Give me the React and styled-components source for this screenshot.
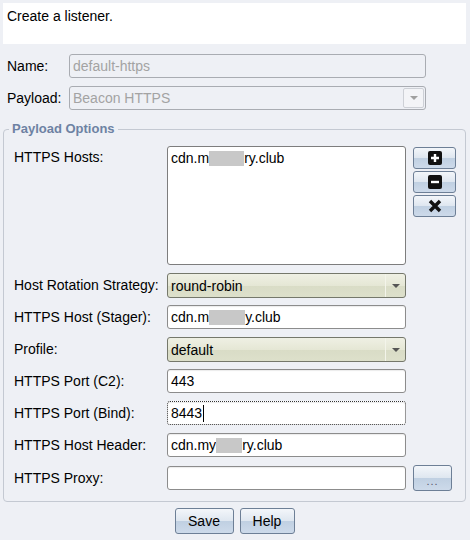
import React from "react";
import styled, { createGlobalStyle } from "styled-components";

const GlobalStyle = createGlobalStyle`
  html, body {
    margin: 0;
    background: #eef0f5;
  }
  body {
    font-family: "Liberation Sans", Arial, sans-serif;
    font-size: 14px;
    color: #000;
  }
`;

const Page = styled.div`
  width: 470px;
  height: 540px;
  box-sizing: border-box;
  padding: 3px 4px 0 3px;
  display: flex;
  flex-direction: column;
`;

const Header = styled.div`
  height: 41px;
  box-sizing: border-box;
  background: #fff;
  padding: 5px 4px;
  line-height: 16px;
`;

const TopForm = styled.div`
  margin-top: 10px;
  padding-left: 4px;
  display: flex;
  flex-direction: column;
  gap: 8px;
`;

const Row = styled.div`
  display: flex;
  align-items: center;
`;

const TopLabel = styled.div`
  width: 62px;
  line-height: 16px;
`;

const TextBox = styled.div`
  width: ${props => props.width || "239px"};
  height: 24px;
  box-sizing: border-box;
  display: flex;
  align-items: center;
  padding: 0 3px;
  border: 1px ${props => (props.focused ? "dotted #333" : "solid #8c8c8c")};
  border-radius: 3px;
  background: ${props => (props.disabled ? "#eef0f5" : "#fff")};
  color: ${props => (props.disabled ? "#a3a3a3" : "#000")};
  box-shadow: ${props =>
    props.disabled ? "none" : "inset 0 1px 1px rgba(0, 0, 0, 0.08)"};
  white-space: nowrap;
  overflow: hidden;
  border-color: ${props => (props.disabled ? "#a9acb2" : "")};
`;

const Combo = styled.div`
  width: ${props => props.width || "239px"};
  height: ${props => (props.disabled ? "24px" : "25px")};
  margin-bottom: ${props => (props.disabled ? "0" : "-1px")};
  box-sizing: border-box;
  display: flex;
  align-items: stretch;
  border: 1px solid ${props => (props.disabled ? "#a9acb2" : "#75786b")};
  border-radius: 3px;
  background: ${props =>
    props.disabled
      ? "#eef0f5"
      : "linear-gradient(to bottom, #eff0e4 0%, #e5e7d5 50%, #d9dcc6 52%, #dde0cb 100%)"};
  color: ${props => (props.disabled ? "#a3a3a3" : "#000")};
  overflow: hidden;
`;

const ComboText = styled.div`
  flex: 1;
  display: flex;
  align-items: center;
  padding-left: 3px;
`;

const ComboArrow = styled.div`
  width: 19px;
  display: flex;
  align-items: center;
  justify-content: center;
  margin: ${props => (props.disabled ? "1px" : "0")};
  border-left: 1px solid ${props => (props.disabled ? "#cdd0d6" : "#f3f4ea")};
  border: ${props => (props.disabled ? "1px solid #cdd0d6" : "")};
  border-radius: ${props => (props.disabled ? "2px" : "0")};
  background: ${props => (props.disabled ? "#f3f4f7" : "transparent")};
  &::after {
    content: "";
    border-left: 4px solid transparent;
    border-right: 4px solid transparent;
    border-top: 4px solid ${props => (props.disabled ? "#a0a0a0" : "#555")};
  }
`;

const Options = styled.fieldset`
  width: 463px;
  box-sizing: border-box;
  margin: 11px 0 0 0;
  padding: 9px 9px 10px 10px;
  border: 1px solid #c4c9d2;
  border-radius: 4px;
`;

const Legend = styled.legend`
  margin-left: -5px;
  padding: 0 3px;
  font-size: 13px;
  font-weight: bold;
  line-height: 16px;
  color: #6d82a3;
`;

const Grid = styled.div`
  display: grid;
  grid-template-columns: 146px 239px 43px;
  column-gap: 7px;
  row-gap: 8px;
  align-items: center;
`;

const Label = styled.div`
  line-height: 16px;
  align-self: ${props => (props.top ? "start" : "center")};
  margin-top: ${props => (props.top ? "3px" : "0")};
  white-space: nowrap;
`;

const HostList = styled.div`
  height: 119px;
  box-sizing: border-box;
  border: 1px solid #7d7d7d;
  border-radius: 3px;
  background: #fff;
  padding: 3px;
  line-height: 16px;
  white-space: nowrap;
`;

const SideButtons = styled.div`
  align-self: start;
  margin-top: 1px;
  display: flex;
  flex-direction: column;
  gap: 2px;
`;

const Button = styled.button`
  width: ${props => props.width || "43px"};
  height: ${props => props.height || "22px"};
  box-sizing: border-box;
  padding: 0;
  display: flex;
  align-items: center;
  justify-content: center;
  border: 1px solid #6d7f96;
  border-radius: 3px;
  background: linear-gradient(
    to bottom,
    #f3f6fa 0%,
    #dfe7f0 48%,
    #c0d0e2 52%,
    #cddaea 100%
  );
  font-family: "Liberation Sans", Arial, sans-serif;
  font-size: 14px;
  color: #000;
`;

const Dots = styled.span`
  font-size: 11px;
  color: #556;
  letter-spacing: 1px;
  margin-top: 6px;
`;

const Redact = styled.span`
  display: inline-block;
  width: ${props => props.width}px;
  height: 15px;
  vertical-align: -3px;
  background: #c8c8c8;
  filter: blur(0.6px);
`;

const Caret = styled.span`
  display: inline-block;
  width: 1px;
  height: 17px;
  background: #000;
  margin-left: 1px;
`;

const Footer = styled.div`
  margin-top: 6px;
  display: flex;
  justify-content: center;
  gap: 6px;
`;

const PlusIcon = () => (
  <svg width="16" height="16" viewBox="0 0 16 16">
    <rect x="1" y="1" width="14" height="14" rx="2" fill="#111" />
    <path d="M8 4v8M4 8h8" stroke="#fff" strokeWidth="2.4" />
  </svg>
);

const MinusIcon = () => (
  <svg width="16" height="16" viewBox="0 0 16 16">
    <rect x="1" y="1" width="14" height="14" rx="2" fill="#111" />
    <path d="M4 8h8" stroke="#fff" strokeWidth="2.4" />
  </svg>
);

const CloseIcon = () => (
  <svg width="16" height="16" viewBox="0 0 16 16">
    <path d="M3 3l10 10M13 3L3 13" stroke="#111" strokeWidth="3.4" />
  </svg>
);

export default function App() {
  return (
    <>
      <GlobalStyle />
      <Page>
        <Header>Create a listener.</Header>
        <TopForm>
          <Row>
            <TopLabel>Name:</TopLabel>
            <TextBox width="357px" disabled>
              default-https
            </TextBox>
          </Row>
          <Row>
            <TopLabel>Payload:</TopLabel>
            <Combo width="357px" disabled>
              <ComboText>Beacon HTTPS</ComboText>
              <ComboArrow disabled />
            </Combo>
          </Row>
        </TopForm>
        <Options>
          <Legend>Payload Options</Legend>
          <Grid>
            <Label top>HTTPS Hosts:</Label>
            <HostList>
              cdn.m<Redact width={35} />ry.club
            </HostList>
            <SideButtons>
              <Button>
                <PlusIcon />
              </Button>
              <Button>
                <MinusIcon />
              </Button>
              <Button>
                <CloseIcon />
              </Button>
            </SideButtons>

            <Label>Host Rotation Strategy:</Label>
            <Combo>
              <ComboText>round-robin</ComboText>
              <ComboArrow />
            </Combo>
            <span />

            <Label>HTTPS Host (Stager):</Label>
            <TextBox>
              cdn.m<Redact width={36} />y.club
            </TextBox>
            <span />

            <Label>Profile:</Label>
            <Combo>
              <ComboText>default</ComboText>
              <ComboArrow />
            </Combo>
            <span />

            <Label>HTTPS Port (C2):</Label>
            <TextBox>443</TextBox>
            <span />

            <Label>HTTPS Port (Bind):</Label>
            <TextBox focused>
              8443
              <Caret />
            </TextBox>
            <span />

            <Label>HTTPS Host Header:</Label>
            <TextBox>
              cdn.my<Redact width={26} />ry.club
            </TextBox>
            <span />

            <Label>HTTPS Proxy:</Label>
            <TextBox />
            <Button width="39px" height="26px">
              <Dots>...</Dots>
            </Button>
          </Grid>
        </Options>
        <Footer>
          <Button width="59px" height="26px">
            Save
          </Button>
          <Button width="55px" height="26px">
            Help
          </Button>
        </Footer>
      </Page>
    </>
  );
}
